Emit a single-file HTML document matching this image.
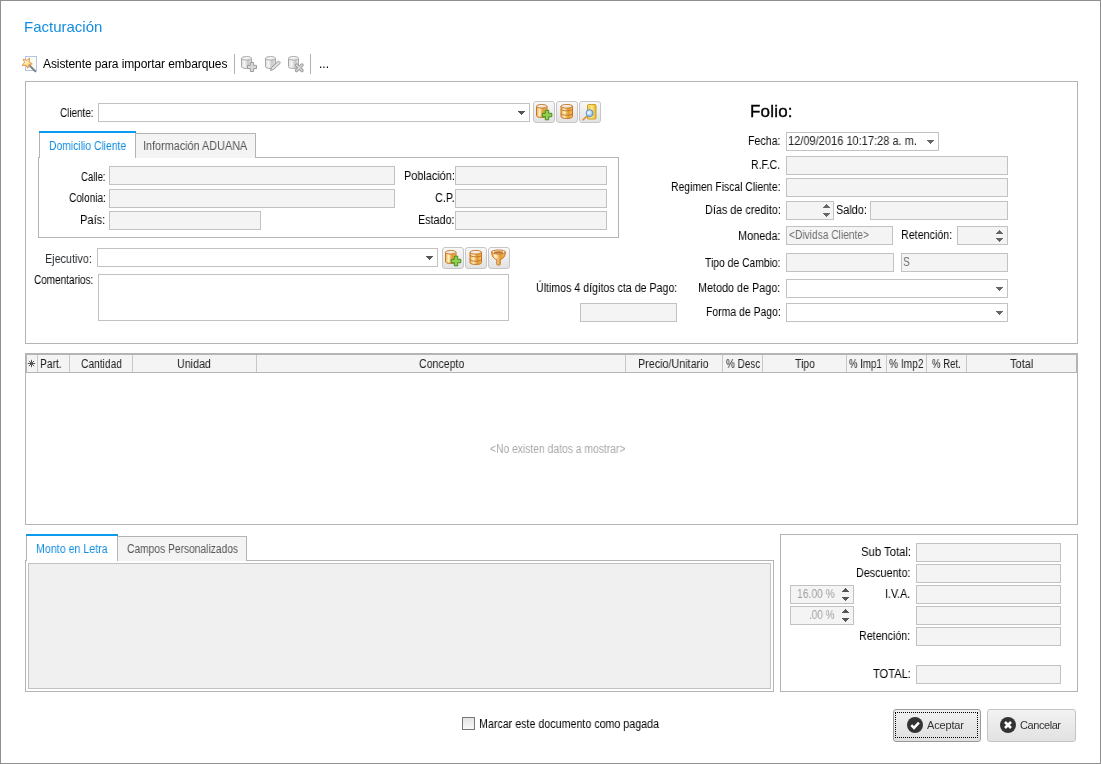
<!DOCTYPE html><html><head><meta charset="utf-8"><style>*{margin:0;padding:0;box-sizing:border-box}
html,body{width:1101px;height:764px;overflow:hidden;background:#fff}
body{position:relative;font-family:'Liberation Sans', sans-serif;}
body>div,body>svg{position:absolute;white-space:pre}
body>div{will-change:transform}
</style></head><body>
<div style="left:0;top:0;width:1101px;height:764px;border:1px solid #8f8f8f;background:#fff"></div>
<div style="left:24.0px;top:18px;font-size:15px;line-height:17px;color:#138de0;letter-spacing:0.0px;">Facturación</div>
<div style="left:43.0px;top:57px;font-size:12px;line-height:14px;color:#000;letter-spacing:-0.094px;">Asistente para importar embarques</div>
<div style="left:234px;top:54px;width:1px;height:20px;background:#b0b0b0;"></div>
<div style="left:310px;top:54px;width:1px;height:20px;background:#b0b0b0;"></div>
<div style="left:319.0px;top:57px;font-size:12px;line-height:14px;color:#000;letter-spacing:0px;">...</div>
<div style="left:25px;top:81px;width:1053px;height:263px;border:1px solid #b4b4b4;background:#fff;"></div>
<div style="left:60.0px;top:106px;font-size:12px;line-height:14px;color:#000;letter-spacing:0px;transform:scaleX(0.825);transform-origin:0 0;">Cliente:</div>
<div style="left:98px;top:103px;width:432px;height:19px;border:1px solid #c2c2c2;background:#fff;"></div>
<svg style="left:518px;top:111px" width="7" height="4" shape-rendering="crispEdges"><rect x="0" y="0" width="7" height="1" fill="#555"/><rect x="1" y="1" width="5" height="1" fill="#555"/><rect x="2" y="2" width="3" height="1" fill="#555"/><rect x="3" y="3" width="1" height="1" fill="#555"/></svg>
<div style="left:38px;top:157px;width:581px;height:81px;border:1px solid #b4b4b4;background:#fff;"></div>
<div style="left:135px;top:133px;width:121px;height:25px;border:1px solid #b4b4b4;background:#f4f4f4;border-bottom:none"></div>
<div style="left:39px;top:133px;width:1px;height:25px;background:#b4b4b4;"></div>
<div style="left:39px;top:131px;width:97px;height:2px;background:#0a9af0;"></div>
<div style="left:40px;top:157px;width:95px;height:1px;background:#fff;"></div>
<div style="left:49.14px;top:139px;font-size:12px;line-height:14px;color:#138de0;letter-spacing:0px;transform:scaleX(0.8636);transform-origin:0 0;">Domicilio Cliente</div>
<div style="left:143.1px;top:139px;font-size:12px;line-height:14px;color:#555555;letter-spacing:0px;transform:scaleX(0.9035);transform-origin:0 0;">Información ADUANA</div>
<div style="left:81.0px;top:170px;font-size:12px;line-height:14px;color:#000;letter-spacing:0px;transform:scaleX(0.8);transform-origin:0 0;">Calle:</div>
<div style="left:109px;top:166px;width:286px;height:19px;border:1px solid #c2c2c2;background:#f4f4f4;"></div>
<div style="left:69.0px;top:191px;font-size:12px;line-height:14px;color:#000;letter-spacing:0px;transform:scaleX(0.8372);transform-origin:0 0;">Colonia:</div>
<div style="left:109px;top:189px;width:286px;height:19px;border:1px solid #c2c2c2;background:#f4f4f4;"></div>
<div style="left:80.08px;top:213px;font-size:12px;line-height:14px;color:#000;letter-spacing:0px;transform:scaleX(0.9231);transform-origin:0 0;">País:</div>
<div style="left:109px;top:211px;width:152px;height:19px;border:1px solid #c2c2c2;background:#f4f4f4;"></div>
<div style="left:404.09px;top:169px;font-size:12px;line-height:14px;color:#000;letter-spacing:0px;transform:scaleX(0.9074);transform-origin:0 0;">Población:</div>
<div style="left:455px;top:166px;width:152px;height:19px;border:1px solid #c2c2c2;background:#f4f4f4;"></div>
<div style="left:435.0px;top:191px;font-size:12px;line-height:14px;color:#000;letter-spacing:0px;transform:scaleX(0.9048);transform-origin:0 0;">C.P.</div>
<div style="left:455px;top:189px;width:152px;height:19px;border:1px solid #c2c2c2;background:#f4f4f4;"></div>
<div style="left:418.1px;top:213px;font-size:12px;line-height:14px;color:#000;letter-spacing:0px;transform:scaleX(0.8974);transform-origin:0 0;">Estado:</div>
<div style="left:455px;top:211px;width:152px;height:19px;border:1px solid #c2c2c2;background:#f4f4f4;"></div>
<div style="left:45.1px;top:252px;font-size:12px;line-height:14px;color:#2b2e31;letter-spacing:0px;transform:scaleX(0.9);transform-origin:0 0;">Ejecutivo:</div>
<div style="left:97px;top:248px;width:341px;height:19px;border:1px solid #c2c2c2;background:#fff;"></div>
<svg style="left:426px;top:256px" width="7" height="4" shape-rendering="crispEdges"><rect x="0" y="0" width="7" height="1" fill="#555"/><rect x="1" y="1" width="5" height="1" fill="#555"/><rect x="2" y="2" width="3" height="1" fill="#555"/><rect x="3" y="3" width="1" height="1" fill="#555"/></svg>
<div style="left:34.0px;top:273px;font-size:12px;line-height:14px;color:#000;letter-spacing:0px;transform:scaleX(0.831);transform-origin:0 0;">Comentarios:</div>
<div style="left:98px;top:274px;width:411px;height:47px;border:1px solid #c2c2c2;background:#fff;"></div>
<div style="left:750.0px;top:102px;font-size:17px;line-height:19px;color:#000;letter-spacing:0.2px;-webkit-text-stroke:0.35px #000;">Folio:</div>
<div style="left:748.11px;top:134px;font-size:12px;line-height:14px;color:#000;letter-spacing:0px;transform:scaleX(0.8857);transform-origin:0 0;">Fecha:</div>
<div style="left:786px;top:132px;width:153px;height:19px;border:1px solid #c2c2c2;background:#fff;"></div>
<div style="left:788.08px;top:134px;font-size:12px;line-height:14px;color:#222;letter-spacing:0px;transform:scaleX(0.9203);transform-origin:0 0;">12/09/2016 10:17:28 a. m.</div>
<svg style="left:927px;top:140px" width="7" height="4" shape-rendering="crispEdges"><rect x="0" y="0" width="7" height="1" fill="#666"/><rect x="1" y="1" width="5" height="1" fill="#666"/><rect x="2" y="2" width="3" height="1" fill="#666"/><rect x="3" y="3" width="1" height="1" fill="#666"/></svg>
<div style="left:751.12px;top:158px;font-size:12px;line-height:14px;color:#000;letter-spacing:0px;transform:scaleX(0.875);transform-origin:0 0;">R.F.C.</div>
<div style="left:786px;top:156px;width:222px;height:19px;border:1px solid #c2c2c2;background:#f4f4f4;"></div>
<div style="left:671.14px;top:180px;font-size:12px;line-height:14px;color:#000;letter-spacing:0px;transform:scaleX(0.864);transform-origin:0 0;">Regimen Fiscal Cliente:</div>
<div style="left:786px;top:178px;width:222px;height:19px;border:1px solid #c2c2c2;background:#f4f4f4;"></div>
<div style="left:705.1px;top:203px;font-size:12px;line-height:14px;color:#000;letter-spacing:0px;transform:scaleX(0.9024);transform-origin:0 0;">Días de credito:</div>
<div style="left:786px;top:201px;width:48px;height:19px;border:1px solid #c2c2c2;background:#f4f4f4;"></div>
<svg style="left:823px;top:204px" width="7" height="4" shape-rendering="crispEdges"><rect x="3" y="0" width="1" height="1" fill="#666"/><rect x="2" y="1" width="3" height="1" fill="#666"/><rect x="1" y="2" width="5" height="1" fill="#666"/><rect x="0" y="3" width="7" height="1" fill="#666"/></svg>
<svg style="left:823px;top:213px" width="7" height="4" shape-rendering="crispEdges"><rect x="0" y="0" width="7" height="1" fill="#666"/><rect x="1" y="1" width="5" height="1" fill="#666"/><rect x="2" y="2" width="3" height="1" fill="#666"/><rect x="3" y="3" width="1" height="1" fill="#666"/></svg>
<div style="left:836.09px;top:203px;font-size:12px;line-height:14px;color:#000;letter-spacing:0px;transform:scaleX(0.9062);transform-origin:0 0;">Saldo:</div>
<div style="left:870px;top:201px;width:138px;height:19px;border:1px solid #c2c2c2;background:#f4f4f4;"></div>
<div style="left:738.09px;top:229px;font-size:12px;line-height:14px;color:#000;letter-spacing:0px;transform:scaleX(0.9111);transform-origin:0 0;">Moneda:</div>
<div style="left:786px;top:226px;width:107px;height:19px;border:1px solid #c2c2c2;background:#f4f4f4;"></div>
<div style="left:789.0px;top:228px;font-size:12px;line-height:14px;color:#6d6d6d;letter-spacing:0px;transform:scaleX(0.8511);transform-origin:0 0;">&lt;Dividsa Cliente&gt;</div>
<div style="left:901.11px;top:228px;font-size:12px;line-height:14px;color:#000;letter-spacing:0px;transform:scaleX(0.8929);transform-origin:0 0;">Retención:</div>
<div style="left:957px;top:226px;width:51px;height:19px;border:1px solid #c2c2c2;background:#f4f4f4;"></div>
<svg style="left:996px;top:230px" width="7" height="4" shape-rendering="crispEdges"><rect x="3" y="0" width="1" height="1" fill="#666"/><rect x="2" y="1" width="3" height="1" fill="#666"/><rect x="1" y="2" width="5" height="1" fill="#666"/><rect x="0" y="3" width="7" height="1" fill="#666"/></svg>
<svg style="left:996px;top:238px" width="7" height="4" shape-rendering="crispEdges"><rect x="0" y="0" width="7" height="1" fill="#666"/><rect x="1" y="1" width="5" height="1" fill="#666"/><rect x="2" y="2" width="3" height="1" fill="#666"/><rect x="3" y="3" width="1" height="1" fill="#666"/></svg>
<div style="left:705.0px;top:256px;font-size:12px;line-height:14px;color:#000;letter-spacing:0px;transform:scaleX(0.8621);transform-origin:0 0;">Tipo de Cambio:</div>
<div style="left:786px;top:253px;width:108px;height:19px;border:1px solid #c2c2c2;background:#f4f4f4;"></div>
<div style="left:901px;top:253px;width:107px;height:19px;border:1px solid #c2c2c2;background:#f4f4f4;"></div>
<div style="left:903.15px;top:255px;font-size:12px;line-height:14px;color:#6d6d6d;letter-spacing:0px;transform:scaleX(0.85);transform-origin:0 0;">S</div>
<div style="left:698.1px;top:281px;font-size:12px;line-height:14px;color:#000;letter-spacing:0px;transform:scaleX(0.9);transform-origin:0 0;">Metodo de Pago:</div>
<div style="left:786px;top:279px;width:222px;height:19px;border:1px solid #c2c2c2;background:#fff;"></div>
<svg style="left:996px;top:287px" width="7" height="4" shape-rendering="crispEdges"><rect x="0" y="0" width="7" height="1" fill="#666"/><rect x="1" y="1" width="5" height="1" fill="#666"/><rect x="2" y="2" width="3" height="1" fill="#666"/><rect x="3" y="3" width="1" height="1" fill="#666"/></svg>
<div style="left:706.13px;top:305px;font-size:12px;line-height:14px;color:#000;letter-spacing:0px;transform:scaleX(0.869);transform-origin:0 0;">Forma de Pago:</div>
<div style="left:786px;top:303px;width:222px;height:19px;border:1px solid #c2c2c2;background:#fff;"></div>
<svg style="left:996px;top:311px" width="7" height="4" shape-rendering="crispEdges"><rect x="0" y="0" width="7" height="1" fill="#666"/><rect x="1" y="1" width="5" height="1" fill="#666"/><rect x="2" y="2" width="3" height="1" fill="#666"/><rect x="3" y="3" width="1" height="1" fill="#666"/></svg>
<div style="left:536.11px;top:281px;font-size:12px;line-height:14px;color:#000;letter-spacing:0px;transform:scaleX(0.8861);transform-origin:0 0;">Últimos 4 dígitos cta de Pago:</div>
<div style="left:580px;top:303px;width:97px;height:19px;border:1px solid #c2c2c2;background:#f4f4f4;"></div>
<div style="left:25px;top:353px;width:1053px;height:172px;border:1px solid #b4b4b4;background:#fff;"></div>
<div style="left:26px;top:354px;width:1051px;height:18px;background:#f4f4f4;"></div>
<div style="left:26px;top:354px;width:1051px;height:1px;background:#b4b4b4;"></div>
<div style="left:26px;top:354px;width:1px;height:18px;background:#b4b4b4;"></div>
<div style="left:1076px;top:354px;width:1px;height:18px;background:#b4b4b4;"></div>
<div style="left:26px;top:372px;width:1051px;height:1px;background:#b4b4b4;"></div>
<div style="left:37px;top:355px;width:1px;height:17px;background:#c8c8c8;"></div>
<div style="left:69px;top:355px;width:1px;height:17px;background:#c8c8c8;"></div>
<div style="left:132px;top:355px;width:1px;height:17px;background:#c8c8c8;"></div>
<div style="left:256px;top:355px;width:1px;height:17px;background:#c8c8c8;"></div>
<div style="left:625px;top:355px;width:1px;height:17px;background:#c8c8c8;"></div>
<div style="left:722px;top:355px;width:1px;height:17px;background:#c8c8c8;"></div>
<div style="left:762px;top:355px;width:1px;height:17px;background:#c8c8c8;"></div>
<div style="left:846px;top:355px;width:1px;height:17px;background:#c8c8c8;"></div>
<div style="left:886px;top:355px;width:1px;height:17px;background:#c8c8c8;"></div>
<div style="left:926px;top:355px;width:1px;height:17px;background:#c8c8c8;"></div>
<div style="left:966px;top:355px;width:1px;height:17px;background:#c8c8c8;"></div>
<div style="left:40.15px;top:357px;font-size:12px;line-height:14px;color:#222;letter-spacing:0px;transform:scaleX(0.85);transform-origin:0 0;">Part.</div>
<div style="left:81.0px;top:357px;font-size:12px;line-height:14px;color:#222;letter-spacing:0px;transform:scaleX(0.8542);transform-origin:0 0;">Cantidad</div>
<div style="left:177.11px;top:357px;font-size:12px;line-height:14px;color:#222;letter-spacing:0px;transform:scaleX(0.8919);transform-origin:0 0;">Unidad</div>
<div style="left:419.0px;top:357px;font-size:12px;line-height:14px;color:#222;letter-spacing:0px;transform:scaleX(0.8824);transform-origin:0 0;">Concepto</div>
<div style="left:638.1px;top:357px;font-size:12px;line-height:14px;color:#222;letter-spacing:0px;transform:scaleX(0.8974);transform-origin:0 0;">Precio/Unitario</div>
<div style="left:726.0px;top:357px;font-size:12px;line-height:14px;color:#222;letter-spacing:0px;transform:scaleX(0.8293);transform-origin:0 0;">% Desc</div>
<div style="left:795.0px;top:357px;font-size:12px;line-height:14px;color:#222;letter-spacing:0px;transform:scaleX(0.8696);transform-origin:0 0;">Tipo</div>
<div style="left:849.0px;top:357px;font-size:12px;line-height:14px;color:#222;letter-spacing:0px;transform:scaleX(0.8049);transform-origin:0 0;">% Imp1</div>
<div style="left:889.0px;top:357px;font-size:12px;line-height:14px;color:#222;letter-spacing:0px;transform:scaleX(0.85);transform-origin:0 0;">% Imp2</div>
<div style="left:932.0px;top:357px;font-size:12px;line-height:14px;color:#222;letter-spacing:0px;transform:scaleX(0.8);transform-origin:0 0;">% Ret.</div>
<div style="left:1010.0px;top:357px;font-size:12px;line-height:14px;color:#222;letter-spacing:0px;transform:scaleX(0.92);transform-origin:0 0;">Total</div>
<div style="left:490.0px;top:442px;font-size:12px;line-height:14px;color:#a8a8a8;letter-spacing:0px;transform:scaleX(0.8599);transform-origin:0 0;">&lt;No existen datos a mostrar&gt;</div>
<div style="left:25px;top:560px;width:749px;height:132px;border:1px solid #b4b4b4;background:#fff;"></div>
<div style="left:117px;top:536px;width:130px;height:25px;border:1px solid #b4b4b4;background:#f4f4f4;border-bottom:none"></div>
<div style="left:26px;top:536px;width:1px;height:25px;background:#b4b4b4;"></div>
<div style="left:26px;top:534px;width:92px;height:2px;background:#0a9af0;"></div>
<div style="left:27px;top:560px;width:90px;height:1px;background:#fff;"></div>
<div style="left:36.11px;top:542px;font-size:12px;line-height:14px;color:#138de0;letter-spacing:0px;transform:scaleX(0.8875);transform-origin:0 0;">Monto en Letra</div>
<div style="left:127.0px;top:542px;font-size:12px;line-height:14px;color:#555555;letter-spacing:0px;transform:scaleX(0.8538);transform-origin:0 0;">Campos Personalizados</div>
<div style="left:28px;top:563px;width:743px;height:126px;border:1px solid #c2c2c2;background:#f0f0f0;"></div>
<div style="left:780px;top:534px;width:298px;height:158px;border:1px solid #b4b4b4;background:#fff;"></div>
<div style="left:916px;top:543px;width:145px;height:19px;border:1px solid #c2c2c2;background:#f4f4f4;"></div>
<div style="left:861.06px;top:545px;font-size:12px;line-height:14px;color:#000;letter-spacing:0px;transform:scaleX(0.9412);transform-origin:0 0;">Sub Total:</div>
<div style="left:916px;top:564px;width:145px;height:19px;border:1px solid #c2c2c2;background:#f4f4f4;"></div>
<div style="left:856.1px;top:566px;font-size:12px;line-height:14px;color:#000;letter-spacing:0px;transform:scaleX(0.8983);transform-origin:0 0;">Descuento:</div>
<div style="left:916px;top:585px;width:145px;height:19px;border:1px solid #c2c2c2;background:#f4f4f4;"></div>
<div style="left:885.11px;top:587px;font-size:12px;line-height:14px;color:#000;letter-spacing:0px;transform:scaleX(0.8889);transform-origin:0 0;">I.V.A.</div>
<div style="left:916px;top:606px;width:145px;height:19px;border:1px solid #c2c2c2;background:#f4f4f4;"></div>
<div style="left:916px;top:627px;width:145px;height:19px;border:1px solid #c2c2c2;background:#f4f4f4;"></div>
<div style="left:859.11px;top:629px;font-size:12px;line-height:14px;color:#000;letter-spacing:0px;transform:scaleX(0.8929);transform-origin:0 0;">Retención:</div>
<div style="left:916px;top:665px;width:145px;height:19px;border:1px solid #c2c2c2;background:#f4f4f4;"></div>
<div style="left:873.0px;top:667px;font-size:12px;line-height:14px;color:#000;letter-spacing:0px;transform:scaleX(0.925);transform-origin:0 0;">TOTAL:</div>
<div style="left:790px;top:585px;width:64px;height:19px;border:1px solid #c2c2c2;background:#f4f4f4;"></div>
<div style="left:797.14px;top:587px;font-size:12px;line-height:14px;color:#a0a0a0;letter-spacing:0px;transform:scaleX(0.8605);transform-origin:0 0;">16.00 %</div>
<svg style="left:842px;top:588px" width="7" height="4" shape-rendering="crispEdges"><rect x="3" y="0" width="1" height="1" fill="#555"/><rect x="2" y="1" width="3" height="1" fill="#555"/><rect x="1" y="2" width="5" height="1" fill="#555"/><rect x="0" y="3" width="7" height="1" fill="#555"/></svg>
<svg style="left:842px;top:597px" width="7" height="4" shape-rendering="crispEdges"><rect x="0" y="0" width="7" height="1" fill="#555"/><rect x="1" y="1" width="5" height="1" fill="#555"/><rect x="2" y="2" width="3" height="1" fill="#555"/><rect x="3" y="3" width="1" height="1" fill="#555"/></svg>
<div style="left:790px;top:606px;width:64px;height:19px;border:1px solid #c2c2c2;background:#f4f4f4;"></div>
<div style="left:809.17px;top:608px;font-size:12px;line-height:14px;color:#a0a0a0;letter-spacing:0px;transform:scaleX(0.8333);transform-origin:0 0;">.00 %</div>
<svg style="left:842px;top:609px" width="7" height="4" shape-rendering="crispEdges"><rect x="3" y="0" width="1" height="1" fill="#555"/><rect x="2" y="1" width="3" height="1" fill="#555"/><rect x="1" y="2" width="5" height="1" fill="#555"/><rect x="0" y="3" width="7" height="1" fill="#555"/></svg>
<svg style="left:842px;top:618px" width="7" height="4" shape-rendering="crispEdges"><rect x="0" y="0" width="7" height="1" fill="#555"/><rect x="1" y="1" width="5" height="1" fill="#555"/><rect x="2" y="2" width="3" height="1" fill="#555"/><rect x="3" y="3" width="1" height="1" fill="#555"/></svg>
<div style="left:462px;top:717px;width:13px;height:13px;border:1px solid #777;background:linear-gradient(#e4e4e4,#f8f8f8);"></div>
<div style="left:479.11px;top:717px;font-size:12px;line-height:14px;color:#000;letter-spacing:0px;transform:scaleX(0.8905);transform-origin:0 0;">Marcar este documento como pagada</div>
<div style="left:893px;top:709px;width:88px;height:33px;border:1px solid #999;background:linear-gradient(#f0f0f0,#e0e0e0);border-radius:3px"></div>
<div style="left:895px;top:712px;width:83px;height:26px;border:1px dotted #000"></div>
<div style="left:987px;top:709px;width:89px;height:33px;border:1px solid #c4c4c4;background:linear-gradient(#f2f2f2,#e2e2e2);border-radius:3px"></div>
<svg style="left:907px;top:717px" width="16" height="16" viewBox="0 0 16 16"><circle cx="8" cy="8" r="8" fill="#333"/><path d="M4.3 8.2 L7 10.9 L11.9 5.6" stroke="#fff" stroke-width="2.5" fill="none"/></svg>
<svg style="left:1000px;top:717px" width="16" height="16" viewBox="0 0 16 16"><circle cx="8" cy="8" r="8" fill="#333"/><path d="M5 5 L11 11 M11 5 L5 11" stroke="#fff" stroke-width="2.6" fill="none"/></svg>
<div style="left:927.0px;top:719px;font-size:11px;line-height:13px;color:#333;letter-spacing:-0.167px;">Aceptar</div>
<div style="left:1020.0px;top:719px;font-size:11px;line-height:13px;color:#333;letter-spacing:-0.429px;">Cancelar</div>
<svg style="left:0;top:0" width="0" height="0"><defs>
<linearGradient id="gOr" x1="0" x2="1" y1="0" y2="0"><stop offset="0" stop-color="#eeb050"/><stop offset="0.3" stop-color="#fff0c4"/><stop offset="0.62" stop-color="#e39a30"/><stop offset="1" stop-color="#f5c05a"/></linearGradient>
<linearGradient id="gGr" x1="0" x2="1" y1="0" y2="0"><stop offset="0" stop-color="#dadada"/><stop offset="0.3" stop-color="#f7f7f7"/><stop offset="0.65" stop-color="#c8c8c8"/><stop offset="1" stop-color="#e4e4e4"/></linearGradient>
<linearGradient id="gYel" x1="0" x2="1" y1="0" y2="0"><stop offset="0" stop-color="#f0c43a"/><stop offset="0.5" stop-color="#ffe98a"/><stop offset="1" stop-color="#e2b02a"/></linearGradient>
<linearGradient id="gBtn" x1="0" x2="0" y1="0" y2="1"><stop offset="0" stop-color="#f8f8f8"/><stop offset="1" stop-color="#e3e3e3"/></linearGradient>
<radialGradient id="gLens" cx="0.4" cy="0.4" r="0.6"><stop offset="0" stop-color="#ffffff"/><stop offset="1" stop-color="#7fb8ea"/></radialGradient>
</defs></svg>
<svg style="left:19px;top:54px" width="20" height="20" viewBox="0 0 20 20"><defs><linearGradient id="gStar" x1="0" y1="0" x2="1" y2="1"><stop offset="0.2" stop-color="#ffffff"/><stop offset="0.55" stop-color="#fde58a"/><stop offset="1" stop-color="#f7c94a"/></linearGradient></defs><rect x="6.5" y="2.5" width="11" height="14" fill="#fdfcf2" stroke="#b3c3ec" stroke-width="1"/><polygon points="10.5,4.2 10.2,7.9 13.3,9.9 9.7,10.8 8.8,14.3 6.8,11.2 3.1,11.4 5.5,8.6 4.2,5.1 7.7,6.5" fill="url(#gStar)" stroke="#e4904a" stroke-width="1" stroke-linejoin="round"/><line x1="11" y1="12" x2="16.4" y2="17.4" stroke="#7b8089" stroke-width="2" stroke-linecap="round"/></svg>
<svg style="left:240px;top:55px" width="18" height="18" viewBox="0 0 18 18"><path d="M1.5 3.3 V11.7 A5.0 1.8 0 0 0 11.5 11.7 V3.3 Z" fill="url(#gGr)" stroke="#a8a8a8" stroke-width="1"/><ellipse cx="6.5" cy="3.3" rx="5.0" ry="1.8" fill="#fff" fill-opacity="0.8" stroke="#a8a8a8" stroke-width="1"/><path d="M10.4 7.5 H13.6 V10.4 H16.5 V13.6 H13.6 V16.5 H10.4 V13.6 H7.5 V10.4 H10.4 Z" fill="#d8d8d8" stroke="#9c9c9c" stroke-width="1"/></svg>
<svg style="left:264px;top:55px" width="18" height="18" viewBox="0 0 18 18"><path d="M1.5 3.3 V11.7 A5.0 1.8 0 0 0 11.5 11.7 V3.3 Z" fill="url(#gGr)" stroke="#a8a8a8" stroke-width="1"/><ellipse cx="6.5" cy="3.3" rx="5.0" ry="1.8" fill="#fff" fill-opacity="0.8" stroke="#a8a8a8" stroke-width="1"/><path d="M6.5 15.5 L7.5 12.5 L14.5 6 L16.5 8 L9.5 14.5 Z" fill="#e0e0e0" stroke="#9a9a9a" stroke-width="1"/></svg>
<svg style="left:287px;top:55px" width="18" height="18" viewBox="0 0 18 18"><path d="M1.5 3.3 V11.7 A5.0 1.8 0 0 0 11.5 11.7 V3.3 Z" fill="url(#gGr)" stroke="#a8a8a8" stroke-width="1"/><ellipse cx="6.5" cy="3.3" rx="5.0" ry="1.8" fill="#fff" fill-opacity="0.8" stroke="#a8a8a8" stroke-width="1"/><path d="M9.5 10 L15 15.5 M15 10 L9.5 15.5" stroke="#9a9a9a" stroke-width="3.4" stroke-linecap="round"/><path d="M9.5 10 L15 15.5 M15 10 L9.5 15.5" stroke="#d6d6d6" stroke-width="1.6" stroke-linecap="round"/></svg>
<div style="left:533px;top:101px;width:22px;height:22px;border:1px solid #c6c6c6;border-radius:3px;background:linear-gradient(#f8f8f8,#e2e2e2)"></div>
<div style="left:556px;top:101px;width:22px;height:22px;border:1px solid #c6c6c6;border-radius:3px;background:linear-gradient(#f8f8f8,#e2e2e2)"></div>
<div style="left:579px;top:101px;width:22px;height:22px;border:1px solid #c6c6c6;border-radius:3px;background:linear-gradient(#f8f8f8,#e2e2e2)"></div>
<svg style="left:535px;top:103px" width="18" height="18" viewBox="0 0 18 18"><path d="M1.5 3.3 V12.7 A5.25 1.8 0 0 0 12.0 12.7 V3.3 Z" fill="url(#gOr)" stroke="#c27628" stroke-width="1"/><ellipse cx="6.75" cy="3.3" rx="5.25" ry="1.8" fill="#fff" fill-opacity="0.8" stroke="#c27628" stroke-width="1"/><path d="M10.3 7.2 H13.7 V10.3 H16.8 V13.7 H13.7 V16.8 H10.3 V13.7 H7.2 V10.3 H10.3 Z" fill="#8fd050" stroke="#4a8a1e" stroke-width="1"/></svg>
<svg style="left:558px;top:103px" width="18" height="18" viewBox="0 0 18 18"><path d="M3 3.3 V13.7 A5.75 1.8 0 0 0 14.5 13.7 V3.3 Z" fill="url(#gOr)" stroke="#c27628" stroke-width="1"/><ellipse cx="8.75" cy="3.3" rx="5.75" ry="1.8" fill="#fff" fill-opacity="0.8" stroke="#c27628" stroke-width="1"/><path d="M3 6.2 A5.75 1.6 0 0 0 14.5 6.2 M3 10.6 A5.75 1.6 0 0 0 14.5 10.6" fill="none" stroke="#c27628" stroke-width="1"/></svg>
<svg style="left:581px;top:103px" width="18" height="18" viewBox="0 0 18 18"><rect x="6.5" y="1.5" width="8.5" height="14.5" rx="1" fill="url(#gYel)" stroke="#d0a020" stroke-width="1"/><line x1="2.2" y1="16.8" x2="5.5" y2="13.5" stroke="#e58a2a" stroke-width="1.6" stroke-linecap="round"/><circle cx="8.6" cy="10.2" r="3.5" fill="url(#gLens)" stroke="#5c8fc8" stroke-width="1"/></svg>
<div style="left:442px;top:247px;width:22px;height:22px;border:1px solid #c6c6c6;border-radius:3px;background:linear-gradient(#f8f8f8,#e2e2e2)"></div>
<div style="left:465px;top:247px;width:22px;height:22px;border:1px solid #c6c6c6;border-radius:3px;background:linear-gradient(#f8f8f8,#e2e2e2)"></div>
<div style="left:488px;top:247px;width:22px;height:22px;border:1px solid #c6c6c6;border-radius:3px;background:linear-gradient(#f8f8f8,#e2e2e2)"></div>
<svg style="left:444px;top:249px" width="18" height="18" viewBox="0 0 18 18"><path d="M1.5 3.3 V12.7 A5.25 1.8 0 0 0 12.0 12.7 V3.3 Z" fill="url(#gOr)" stroke="#c27628" stroke-width="1"/><ellipse cx="6.75" cy="3.3" rx="5.25" ry="1.8" fill="#fff" fill-opacity="0.8" stroke="#c27628" stroke-width="1"/><path d="M10.3 7.2 H13.7 V10.3 H16.8 V13.7 H13.7 V16.8 H10.3 V13.7 H7.2 V10.3 H10.3 Z" fill="#8fd050" stroke="#4a8a1e" stroke-width="1"/></svg>
<svg style="left:467px;top:249px" width="18" height="18" viewBox="0 0 18 18"><path d="M3 3.3 V13.7 A5.75 1.8 0 0 0 14.5 13.7 V3.3 Z" fill="url(#gOr)" stroke="#c27628" stroke-width="1"/><ellipse cx="8.75" cy="3.3" rx="5.75" ry="1.8" fill="#fff" fill-opacity="0.8" stroke="#c27628" stroke-width="1"/><path d="M3 6.2 A5.75 1.6 0 0 0 14.5 6.2 M3 10.6 A5.75 1.6 0 0 0 14.5 10.6" fill="none" stroke="#c27628" stroke-width="1"/></svg>
<svg style="left:490px;top:249px" width="18" height="18" viewBox="0 0 18 18"><path d="M1.5 3 Q2 9.5 6.8 10.5 V15.5 Q8.5 17 10.2 15.5 V10.5 Q15 9.5 15.5 3 Z" fill="url(#gOr)" stroke="#c27628" stroke-width="1"/><ellipse cx="8.5" cy="3" rx="7" ry="2" fill="#fff0cc" stroke="#c27628" stroke-width="1"/><ellipse cx="8.5" cy="3.4" rx="4.5" ry="1.1" fill="#c0702a"/></svg>
<svg style="left:27px;top:359px" width="9" height="9" viewBox="0 0 9 9"><path d="M4.5 0.8 V8.2 M0.8 4.5 H8.2 M1.9 1.9 L7.1 7.1 M7.1 1.9 L1.9 7.1" stroke="#555" stroke-width="1"/></svg>
</body></html>
